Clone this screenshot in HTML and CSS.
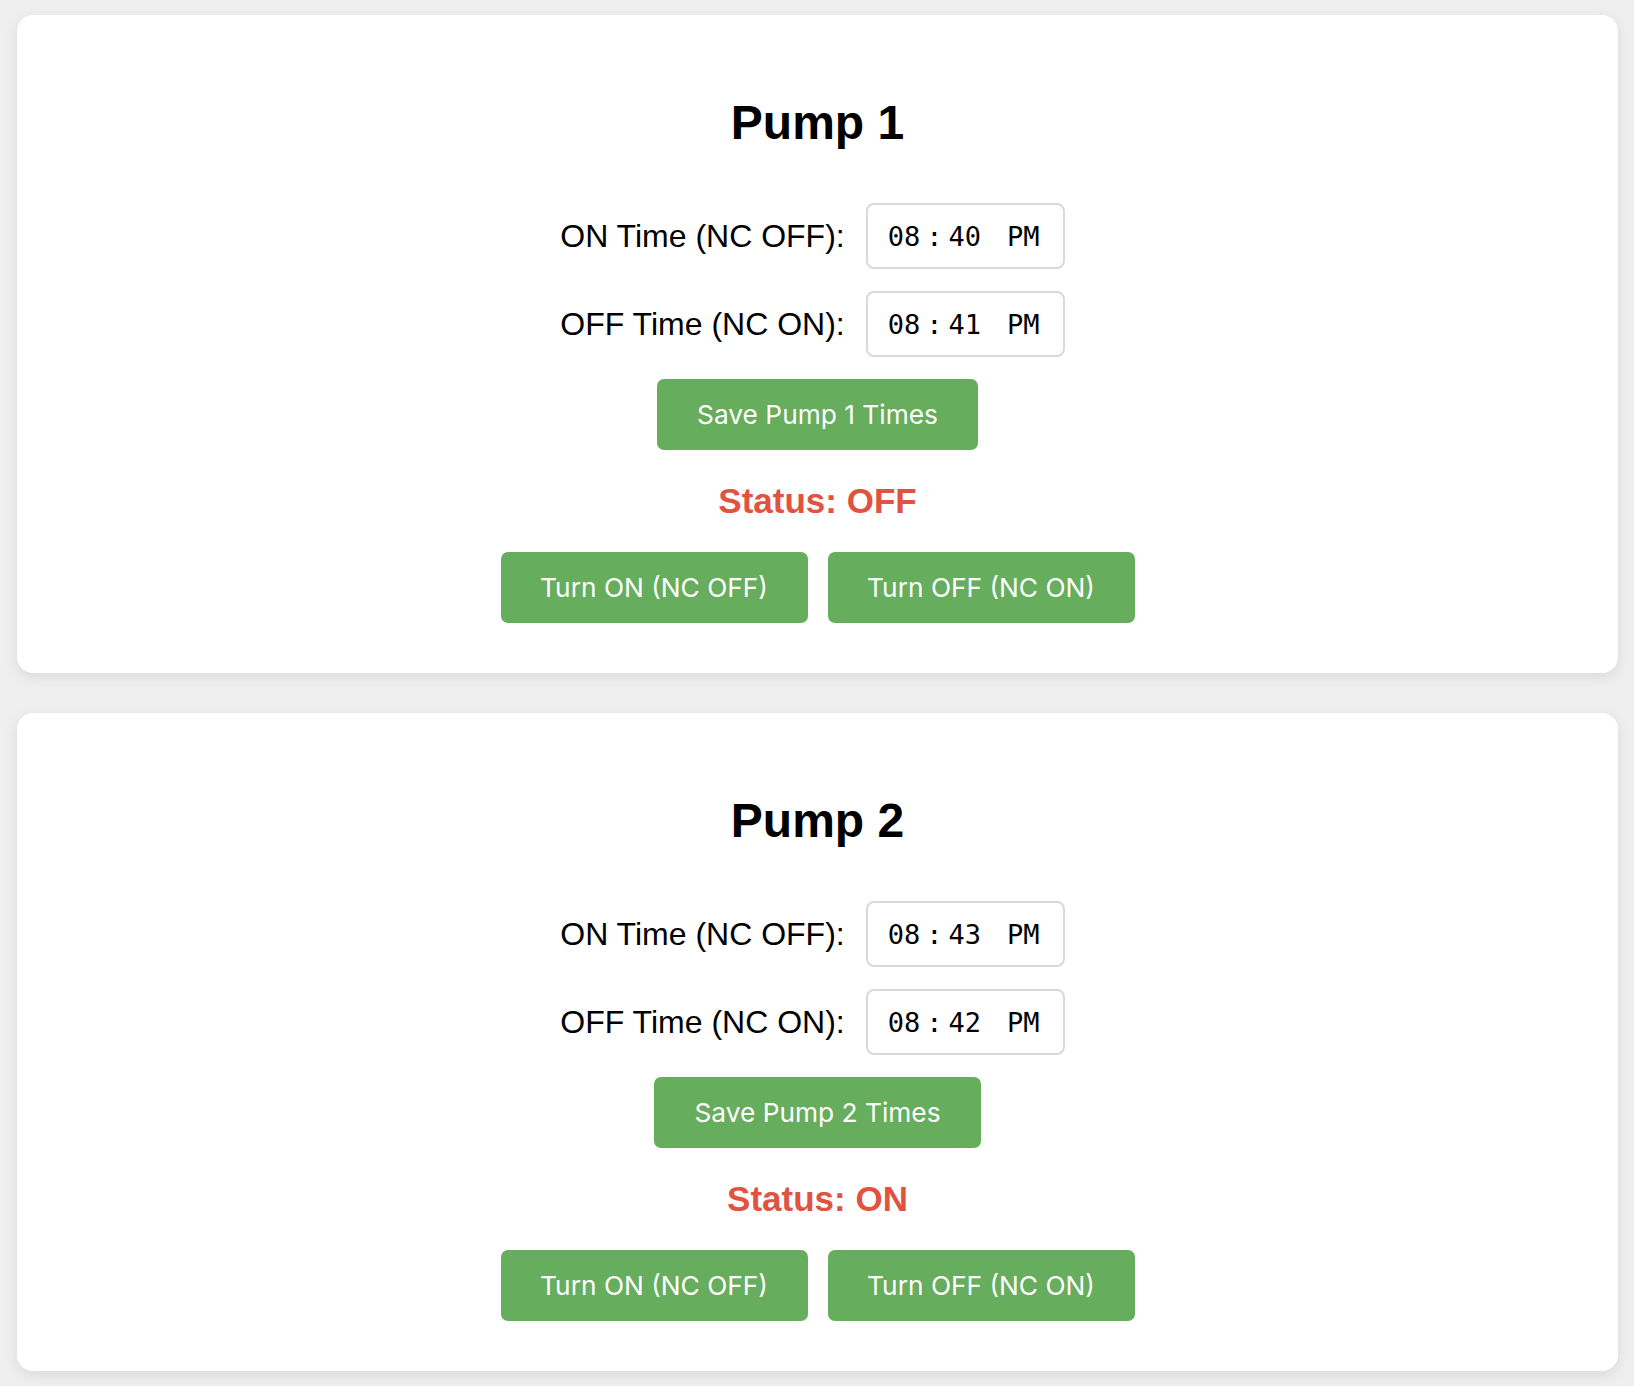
FILE: index.html
```html
<!DOCTYPE html>
<html lang="en">
<head>
<meta charset="utf-8">
<title>Pump Control</title>
<link rel="stylesheet" href="styles.css">
</head>
<body>
  <section class="card">
    <h2 class="title">Pump 1</h2>
    <div class="row">
      <label class="label">ON Time (NC OFF):</label>
      <div class="time-input"><span>08</span><span class="sep">:</span><span>40</span><span class="ampm">PM</span></div>
    </div>
    <div class="row">
      <label class="label">OFF Time (NC ON):</label>
      <div class="time-input"><span>08</span><span class="sep">:</span><span>41</span><span class="ampm">PM</span></div>
    </div>
    <button class="btn">Save Pump 1 Times</button>
    <p class="status">Status: OFF</p>
    <div class="actions">
      <button class="btn btn-action">Turn ON (NC OFF)</button>
      <button class="btn btn-action">Turn OFF (NC ON)</button>
    </div>
  </section>

  <section class="card">
    <h2 class="title">Pump 2</h2>
    <div class="row">
      <label class="label">ON Time (NC OFF):</label>
      <div class="time-input"><span>08</span><span class="sep">:</span><span>43</span><span class="ampm">PM</span></div>
    </div>
    <div class="row">
      <label class="label">OFF Time (NC ON):</label>
      <div class="time-input"><span>08</span><span class="sep">:</span><span>42</span><span class="ampm">PM</span></div>
    </div>
    <button class="btn">Save Pump 2 Times</button>
    <p class="status">Status: ON</p>
    <div class="actions">
      <button class="btn btn-action">Turn ON (NC OFF)</button>
      <button class="btn btn-action">Turn OFF (NC ON)</button>
    </div>
  </section>
</body>
</html>
```

FILE: styles.css
```css
html {
  background: #efefef;
}

body {
  margin: 0;
  padding: 15px 16px 15px 17px;
  background: #efefef;
  font-family: "Liberation Sans", Arial, Helvetica, sans-serif;
  color: #000;
}

.card {
  background: #fff;
  border-radius: 16px;
  box-shadow: 0 4px 14px rgba(0, 0, 0, 0.09);
  padding: 40px 20px 50px;
  margin-bottom: 40px;
  display: flex;
  flex-direction: column;
  align-items: center;
}

.title {
  font-size: 48px;
  font-weight: bold;
  line-height: 55px;
  margin: 40px 0 53px;
}

.row {
  display: flex;
  align-items: center;
  gap: 21px;
  height: 66px;
  margin-bottom: 22px;
  padding-right: 10px;
}

.label {
  font-size: 32px;
  line-height: 37px;
}

.time-input {
  box-sizing: border-box;
  width: 199px;
  height: 66px;
  border: 2px solid #d9d9d9;
  border-radius: 8px;
  padding: 0 0 0 20px;
  display: flex;
  align-items: center;
  font-family: "DejaVu Sans Mono", "Liberation Mono", monospace;
  font-size: 27px;
  color: #000;
}

.time-input .sep {
  margin: 0 6px;
}

.time-input .ampm {
  margin-left: 26px;
}

.btn {
  font-family: Inter, "Noto Sans", sans-serif;
  font-size: 26.3px;
  font-weight: 400;
  color: #fff;
  background: #66ad5d;
  border: none;
  border-radius: 7px;
  height: 71px;
  padding: 0 40px;
  cursor: pointer;
}

.status {
  font-size: 35px;
  font-weight: bold;
  color: #e1523f;
  line-height: 40px;
  margin: 31px 0;
}

.actions {
  display: flex;
  gap: 20px;
}

.btn-action {
  width: 307px;
  padding: 0;
}
```
